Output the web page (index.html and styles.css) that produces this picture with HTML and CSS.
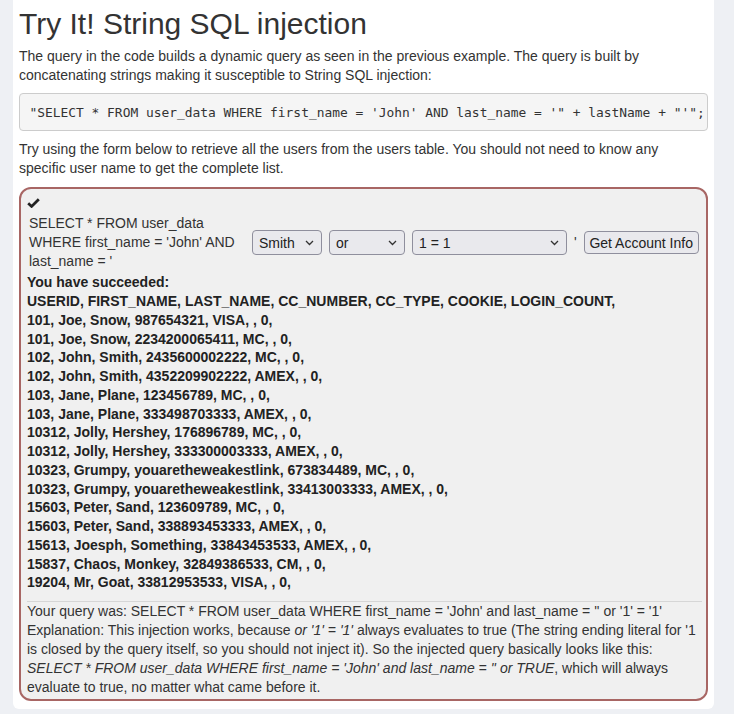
FILE: index.html
```html
<!DOCTYPE html>
<html>
<head>
<meta charset="utf-8">
<link rel="stylesheet" href="styles.css">
</head>
<body>
<div class="page">
  <h2 class="title">Try It! String SQL injection</h2>
  <p class="para">The query in the code builds a dynamic query as seen in the previous example. The query is built by concatenating strings making it susceptible to String SQL injection:</p>
  <pre class="code">"SELECT * FROM user_data WHERE first_name = 'John' AND last_name = '" + lastName + "'";</pre>
  <p class="para para-2">Try using the form below to retrieve all the users from the users table. You should not need to know any specific user name to get the complete list.</p>

  <div class="attack">
    <div class="check-row">
      <svg class="check" width="13" height="10" viewBox="0 0 13 10"><path d="M1.2 5.2 L4.6 8.4 L11.8 1.2" fill="none" stroke="#222" stroke-width="2.8" stroke-linejoin="miter"/></svg>
    </div>
    <form class="query-form">
      <div class="query-text">SELECT * FROM user_data WHERE first_name = 'John' AND last_name = '</div>
      <span class="sel-wrap sel-1">
        <select class="sel"><option>Smith</option></select>
        <svg class="chev" width="9" height="6" viewBox="0 0 9 6"><path d="M1 1 L4.5 4.5 L8 1" fill="none" stroke="#333" stroke-width="1.3"/></svg>
      </span>
      <span class="sel-wrap sel-2">
        <select class="sel"><option>or</option></select>
        <svg class="chev" width="9" height="6" viewBox="0 0 9 6"><path d="M1 1 L4.5 4.5 L8 1" fill="none" stroke="#333" stroke-width="1.3"/></svg>
      </span>
      <span class="sel-wrap sel-3">
        <select class="sel"><option>1 = 1</option></select>
        <svg class="chev" width="9" height="6" viewBox="0 0 9 6"><path d="M1 1 L4.5 4.5 L8 1" fill="none" stroke="#333" stroke-width="1.3"/></svg>
      </span>
      <span class="quote">'</span>
      <button type="button" class="btn">Get Account Info</button>
    </form>
    <div class="feedback">
      <div class="success">You have succeeded:</div>
      <div class="results">USERID, FIRST_NAME, LAST_NAME, CC_NUMBER, CC_TYPE, COOKIE, LOGIN_COUNT, <br>101, Joe, Snow, 987654321, VISA, , 0, <br>101, Joe, Snow, 2234200065411, MC, , 0, <br>102, John, Smith, 2435600002222, MC, , 0, <br>102, John, Smith, 4352209902222, AMEX, , 0, <br>103, Jane, Plane, 123456789, MC, , 0, <br>103, Jane, Plane, 333498703333, AMEX, , 0, <br>10312, Jolly, Hershey, 176896789, MC, , 0, <br>10312, Jolly, Hershey, 333300003333, AMEX, , 0, <br>10323, Grumpy, youaretheweakestlink, 673834489, MC, , 0, <br>10323, Grumpy, youaretheweakestlink, 33413003333, AMEX, , 0, <br>15603, Peter, Sand, 123609789, MC, , 0, <br>15603, Peter, Sand, 338893453333, AMEX, , 0, <br>15613, Joesph, Something, 33843453533, AMEX, , 0, <br>15837, Chaos, Monkey, 32849386533, CM, , 0, <br>19204, Mr, Goat, 33812953533, VISA, , 0, </div>
    </div>
    <hr class="sep">
    <div class="explain">Your query was: SELECT * FROM user_data WHERE first_name = 'John' and last_name = '' or '1' = '1'<br>Explanation: This injection works, because <i>or '1' = '1'</i> always evaluates to true (The string ending literal for '1 is closed by the query itself, so you should not inject it). So the injected query basically looks like this: <i>SELECT * FROM user_data WHERE first_name = 'John' and last_name = '' or TRUE</i>, which will always evaluate to true, no matter what came before it.</div>
  </div>
</div>
</body>
</html>
```

FILE: styles.css
```css
html, body {
  margin: 0;
  padding: 0;
  background: #eef0f4;
}

body {
  font-family: "Liberation Sans", Arial, Helvetica, sans-serif;
  font-size: 14px;
  line-height: 19px;
  color: #333;
}

.page {
  margin-left: 13px;
  width: 689px;
  padding: 7px 6px 8px 6px;
  background: #fff;
  border-radius: 0 0 6px 6px;
}

.title {
  margin: 0;
  font-size: 30px;
  line-height: 33px;
  font-weight: 500;
  color: #333;
}

.para {
  margin: 7px 0 0 0;
}

.para-2 {
  margin-top: 9px;
}

.code {
  margin: 8px 0 0 0;
  padding: 9.5px;
  font-family: "DejaVu Sans Mono", Menlo, monospace;
  font-size: 12.9px;
  line-height: 17px;
  color: #333;
  background: #f5f5f5;
  border: 1px solid #ccc;
  border-radius: 4px;
  white-space: pre;
  overflow: hidden;
}

.attack {
  margin-top: 9px;
  border: 2px solid #a86664;
  border-radius: 12px;
  background: #f0f0f0;
  padding: 4px 4px 2px 6px;
}

.check-row {
  height: 19px;
  display: flex;
  align-items: center;
}

.check {
  display: block;
}

.query-form {
  display: flex;
  align-items: center;
  margin: 2px 0 0 0;
}

.query-text {
  width: 215px;
  padding-left: 2px;
  margin-right: 8px;
}

.sel-wrap {
  position: relative;
  display: inline-block;
  height: 25px;
  margin-right: 7px;
}

.sel-1 { width: 70px; }
.sel-2 { width: 76px; }
.sel-3 { width: 155px; margin-right: 7px; }

.sel {
  -webkit-appearance: none;
  appearance: none;
  box-sizing: border-box;
  width: 100%;
  height: 25px;
  margin: 0;
  padding: 0 20px 0 6px;
  font-family: "Liberation Sans", Arial, sans-serif;
  font-size: 14px;
  color: #222;
  background: #e9e9ed;
  border: 1px solid #8f8f9d;
  border-radius: 4px;
}

.chev {
  position: absolute;
  right: 8px;
  top: 10px;
  pointer-events: none;
}

.quote {
  margin-right: 7px;
}

.btn {
  box-sizing: border-box;
  width: 115px;
  height: 23px;
  margin: 0;
  padding: 0 4px;
  font-family: "Liberation Sans", Arial, sans-serif;
  font-size: 14px;
  color: #222;
  background: #e9e9ed;
  border: 1px solid #8f8f9d;
  border-radius: 4px;
}

.feedback {
  margin-top: 2px;
  font-weight: bold;
  color: #222;
}

.results {
  line-height: 18.75px;
}

.sep {
  margin: 9px 0 0 0;
  border: 0;
  border-top: 1px solid #d6d6d6;
  height: 0;
}

.explain {
  color: #333;
}
```
